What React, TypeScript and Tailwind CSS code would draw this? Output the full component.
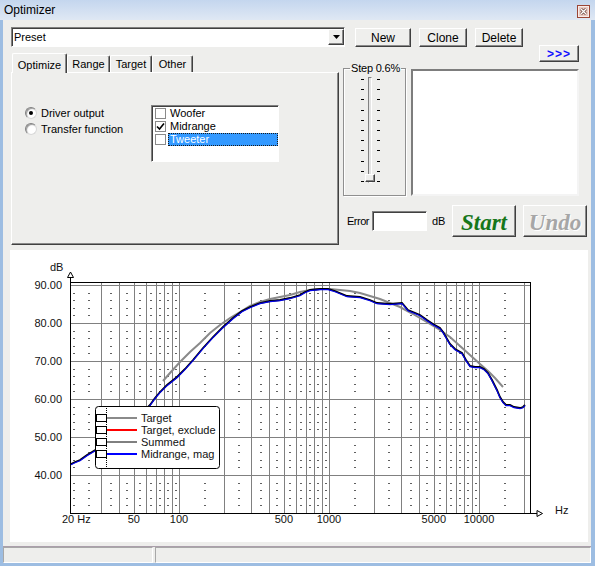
const raised =
  "border border-t-white border-l-white border-r-[#404040] border-b-[#404040] shadow-[inset_-1px_-1px_0_#8a8a8a] bg-[#efefed]";
const sunken =
  "border border-t-[#808080] border-l-[#808080] border-r-white border-b-white shadow-[inset_1px_1px_0_#404040] bg-white";

const fx = (f: number) => 179 + 150 * Math.log10(f / 100);
const dy = (db: number) => 285 + (90 - db) * 3.8;

const majorF = [
  30, 40, 50, 60, 70, 80, 90, 100, 200, 300, 400, 500, 600, 700, 800, 900, 1000, 2000, 3000, 4000, 5000, 6000,
  7000, 8000, 9000, 10000, 20000,
];
const minorF = [
  20, 25, 35, 45, 55, 65, 75, 85, 95, 150, 250, 350, 450, 550, 650, 750, 850, 950, 1500, 2500, 3500, 4500, 5500,
  6500, 7500, 8500, 9500, 15000,
];
const dashDb = [32, 34, 36, 38, 42, 44, 46, 48, 52, 54, 56, 58, 62, 64, 66, 68, 72, 74, 76, 78, 82, 84, 86, 88];

const target =
  "163,381 170,373 180,362 190,352 200,343 210,333 220,325 230,318 240,312 250,306 260,302 270,299 280,297 290,295 300,292 310,290 320,289 330,289 340,290 350,291 360,293 370,296 380,299 390,303 400,307 413,314 425,321 440,330 450,337 460,346 470,355 480,364 488,371 495,378 503,387";
const measured =
  "71,464 75,462 80,460 87,455 92,452 97,449 120,430 145,410 150,405 155,398 160,392 167,385 177,377 185,369 193,360 203,348 213,337 223,327 233,318 242,311 250,307 260,303 270,301 280,300 290,298 300,295 305,292 310,290 320,289 328,289 335,291 347,296 360,297 370,300 377,303 390,304 402,303 408,310 413,312 420,315 427,320 433,324 440,328 443,332 450,344 455,349 462,353 466,360 470,366 475,367 480,367 484,369 488,373 492,380 497,390 500,397 503,402 506,405 510,405 514,407 520,408 523,407 525,405";

const legend = [
  { label: "Target", color: "#8a8a8a", w: 2 },
  { label: "Target, exclude", color: "#ff0000", w: 2 },
  { label: "Summed", color: "#000000", w: 1 },
  { label: "Midrange, mag", color: "#0000ff", w: 2 },
];

function Chart() {
  return (
    <svg width="578" height="292" viewBox="10 250 578 292" className="block" fontSize="11">
      <g shapeRendering="crispEdges">
        {minorF.map((f) =>
          dashDb.map((db) => (
            <line
              key={`${f}-${db}`}
              x1={Math.round(fx(f)) - 1}
              x2={Math.round(fx(f)) + 1}
              y1={Math.round(dy(db)) + 0.5}
              y2={Math.round(dy(db)) + 0.5}
              stroke="#606060"
              strokeWidth="1"
            />
          ))
        )}
        {majorF.map((f) => (
          <line
            key={f}
            x1={Math.round(fx(f)) + 0.5}
            x2={Math.round(fx(f)) + 0.5}
            y1="282"
            y2="513"
            stroke="#808080"
            strokeWidth="1"
          />
        ))}
        {[90, 80, 70, 60, 50, 40].map((db) => (
          <line
            key={db}
            x1="70"
            x2="530"
            y1={Math.round(dy(db)) + 0.5}
            y2={Math.round(dy(db)) + 0.5}
            stroke="#808080"
            strokeWidth="1"
          />
        ))}
        {/* frame and axes */}
        <line x1="70" x2="530.5" y1="282.5" y2="282.5" stroke="#000" />
        <line x1="530.5" x2="530.5" y1="282" y2="513" stroke="#000" />
        <line x1="70.5" x2="70.5" y1="277" y2="514" stroke="#000" />
        <line x1="70" x2="537" y1="513.5" y2="513.5" stroke="#000" />
      </g>
      {[90, 80, 70, 60, 50, 40].map((db) => (
        <text key={db} x="62" y={dy(db) + 4} textAnchor="end" fill="#111">
          {db}.00
        </text>
      ))}
      <path d="M70.5 272 L67.5 277.5 L73.5 277.5 Z" fill="#fff" stroke="#000" />
      <path d="M537 510.5 L537 516.5 L542.5 513.5 Z" fill="#fff" stroke="#000" />
      <text x="50" y="271" fill="#111">dB</text>
      <text x="555" y="514" fill="#111">Hz</text>
      {[
        ["20 Hz", 74, 62],
        ["50", fx(50), 0],
        ["100", fx(100), 0],
        ["500", fx(500), 0],
        ["1000", fx(1000), 0],
        ["5000", fx(5000), 0],
        ["10000", fx(10000), 0],
      ].map(([t, x, left]) => (
        <text
          key={t as string}
          x={left ? (left as number) : (x as number)}
          y="523"
          textAnchor={left ? "start" : "middle"}
          fill="#111"
        >
          {t}
        </text>
      ))}
      {/* curves */}
      <polyline points={target} fill="none" stroke="#8a8a8a" strokeWidth="2" />
      <polyline points={measured} fill="none" stroke="#000" strokeWidth="1.8" />
      <polyline points={measured} fill="none" stroke="#0000e8" strokeWidth="1.2" transform="translate(0 0.7)" />
      {/* legend */}
      <rect x="95.5" y="406.5" width="124" height="62" rx="3" fill="#fff" stroke="#000" />
      <line x1="106.5" x2="106.5" y1="408" y2="467" stroke="#000" strokeDasharray="1 1" />
      {legend.map((l, i) => {
        const y = 418 + i * 12;
        return (
          <g key={l.label}>
            <line x1="106" x2="137" y1={y} y2={y} stroke={l.color} strokeWidth={l.w} />
            <rect x="96.5" y={y - 3.5} width="10" height="7" fill="none" stroke="#000" />
            <text x="141" y={y + 4} fill="#111">
              {l.label}
            </text>
          </g>
        );
      })}
    </svg>
  );
}

function Radio({ label, on }: { label: string; on?: boolean }) {
  return (
    <div className="flex h-[16px] items-center">
      <span className="flex h-[12px] w-[12px] items-center justify-center rounded-full border border-t-[#808080] border-l-[#808080] border-r-[#d8d8d8] border-b-[#d8d8d8] bg-white shadow-[inset_1px_1px_1px_#9a9a9a]">
        {on && <span className="h-[4px] w-[4px] rounded-full bg-black" />}
      </span>
      <span className="ml-[4px]">{label}</span>
    </div>
  );
}

function CheckRow({ label, checked, selected }: { label: string; checked?: boolean; selected?: boolean }) {
  return (
    <div className="flex h-[13px] items-center pl-[3px]">
      <span className="flex h-[11px] w-[11px] items-center justify-center border border-[#8a8a8a] bg-white">
        {checked && (
          <svg width="9" height="9" viewBox="0 0 9 9">
            <path d="M1 4.5 L3.5 7 L8 1.5" fill="none" stroke="#000" strokeWidth="1.6" />
          </svg>
        )}
      </span>
      <span
        className={
          selected
            ? "ml-[2px] flex h-[13px] flex-1 items-center border border-dotted border-[#1a1a1a] bg-[#3399ff] pl-[1px] text-white"
            : "ml-[3px] pl-[1px]"
        }
      >
        {label}
      </span>
    </div>
  );
}

export default function App() {
  return (
    <div className="flex h-[566px] w-[595px] flex-col overflow-hidden bg-[#eeeeec] font-['Liberation_Sans',Arial,sans-serif] text-[11px] text-black">
      {/* title bar */}
      <div className="flex h-[20px] items-center justify-between bg-gradient-to-b from-[#c4d6ee] to-[#dfe8f4] pl-[4px] pr-[5px]">
        <span className="text-[12px]">Optimizer</span>
        <svg width="13" height="13" viewBox="0 0 13 13" className="mt-[2px]">
          <rect x="0.5" y="0.5" width="12" height="12" fill="#e9c9c2" stroke="#9b4535" />
          <rect x="1.5" y="1.5" width="10" height="10" fill="none" stroke="#f8ece9" />
          <path d="M4 4 L9 9 M9 4 L4 9" stroke="#5a3028" strokeWidth="2.6" />
          <path d="M4 4 L9 9 M9 4 L4 9" stroke="#fff" strokeWidth="1.4" />
        </svg>
      </div>

      <div className="flex flex-1 flex-col border-b-[3px] border-l-[3px] border-r-[4px] border-[#9dbde2]">
        {/* preset row */}
        <div className="mt-[7px] flex h-[20px] pl-[8px]">
          <div className={`${sunken} flex w-[334px] items-center justify-between`}>
            <span className="pl-[2px]">Preset</span>
            <span className={`${raised} flex h-[16px] w-[16px] items-center justify-center`}>
              <svg width="7" height="4" viewBox="0 0 7 4">
                <path d="M0 0 L7 0 L3.5 4 Z" fill="#000" />
              </svg>
            </span>
          </div>
          <button className={`${raised} ml-[10px] mt-[1px] h-[19px] w-[56px] text-[12px]`}>New</button>
          <button className={`${raised} ml-[8px] mt-[1px] h-[19px] w-[48px] text-[12px]`}>Clone</button>
          <button className={`${raised} ml-[8px] mt-[1px] h-[19px] w-[48px] text-[12px]`}>Delete</button>
        </div>

        {/* main row */}
        <div className="flex h-[198px]">
          {/* tab widget */}
          <div className="ml-[8px] flex w-[328px] flex-col pt-[6px]">
            <div className="relative z-10 flex h-[19px] items-end pl-[1px]">
              <div className="-mb-[1px] flex h-[20px] w-[55px] items-start justify-center rounded-t-[2px] border border-b-0 border-t-white border-l-white border-r-[#404040] bg-[#eeeeec] pt-[3px] shadow-[inset_-1px_0_0_#8a8a8a]">
                Optimize
              </div>
              {["Range", "Target", "Other"].map((t, i) => (
                <div
                  key={t}
                  className={`flex h-[17px] items-center justify-center rounded-t-[2px] border border-b-0 border-t-white border-l-white border-r-[#404040] shadow-[inset_-1px_0_0_#8a8a8a] ${
                    i === 0 ? "w-[43px]" : i === 1 ? "w-[42px]" : "w-[41px]"
                  }`}
                >
                  {t}
                </div>
              ))}
            </div>
            <div className="flex h-[173px] border border-t-white border-l-white border-r-[#404040] border-b-[#404040] pl-[13px] pt-[32px] shadow-[inset_-1px_-1px_0_#8a8a8a]">
              <div className="flex w-[126px] flex-col">
                <Radio label="Driver output" on />
                <Radio label="Transfer function" />
              </div>
              <div className={`${sunken} h-[57px] w-[128px] pt-[1px]`}>
                <CheckRow label="Woofer" />
                <CheckRow label="Midrange" checked />
                <CheckRow label="Tweeter" selected />
              </div>
            </div>
          </div>

          {/* right column */}
          <div className="ml-[4px] -mt-[2px] flex w-[245px] flex-col">
            <div className="flex justify-end pr-[9px]">
              <button className={`${raised} flex h-[17px] w-[40px] items-center justify-center text-[12px] font-bold tracking-[1px] text-[#1010ff]`}>
                &gt;&gt;&gt;
              </button>
            </div>
            <div className="flex items-start">
              <fieldset className="h-[134px] w-[63px] border border-[#8f8f8f] shadow-[inset_1px_1px_0_white,1px_1px_0_white]">
                <legend className="ml-[6px] whitespace-nowrap px-[1px] text-[11px] leading-[12px] tracking-[-0.2px]">
                  Step 0.6%
                </legend>
                <div className="flex pl-[17px] pt-[3px]">
                  <div className="mt-[2px] flex h-[103px] w-[3px] flex-col justify-between">
                    {Array.from({ length: 11 }).map((_, i) => (
                      <span key={i} className="h-[1px] w-[3px] bg-black" />
                    ))}
                  </div>
                  <div className="relative ml-[4px] h-[106px] w-[4px] border border-t-[#808080] border-l-[#808080] border-r-white border-b-white bg-[#e4e4e4]">
                    <span className={`${raised} absolute -left-[4px] bottom-0 h-[8px] w-[10px]`} />
                  </div>
                  <div className="ml-[5px] mt-[2px] flex h-[103px] w-[3px] flex-col justify-between">
                    {Array.from({ length: 11 }).map((_, i) => (
                      <span key={i} className="h-[1px] w-[3px] bg-black" />
                    ))}
                  </div>
                </div>
              </fieldset>
              <div className="ml-[5px] mt-[7px] h-[127px] w-[168px] border-2 border-t-[#7d7d7d] border-l-[#7d7d7d] border-r-[#f4f4f4] border-b-[#f4f4f4] bg-white" />
            </div>
            <div className="mt-[9px] flex h-[32px] items-center">
              <span className="w-[29px] pl-[4px] text-[11px] tracking-[-0.5px]">Error</span>
              <div className={`${sunken} h-[20px] w-[55px]`} />
              <span className="ml-[5px] w-[20px]">dB</span>
              <button className={`${raised} h-[32px] w-[64px] font-['Liberation_Serif',serif] text-[23px] font-bold italic text-[#16761a]`}>
                Start
              </button>
              <button className={`${raised} ml-[7px] h-[32px] w-[64px] font-['Liberation_Serif',serif] text-[23px] font-bold italic text-[#a6a6a6] [text-shadow:1px_1px_0_#fff]`}>
                Undo
              </button>
            </div>
          </div>
        </div>

        {/* chart */}
        <div className="ml-[7px] mt-[5px] h-[292px] w-[578px] bg-white">
          <Chart />
        </div>

        {/* status bar */}
        <div className="mt-[4px] flex h-[17px] border-t border-[#ab9fab]">
          <div className="h-[16px] w-[150px] border border-t-[#a8a8a8] border-l-[#a8a8a8] border-r-white border-b-white" />
          <div className="ml-[2px] h-[16px] flex-1 border border-t-[#a8a8a8] border-l-[#a8a8a8] border-r-white border-b-white" />
        </div>
      </div>
    </div>
  );
}
